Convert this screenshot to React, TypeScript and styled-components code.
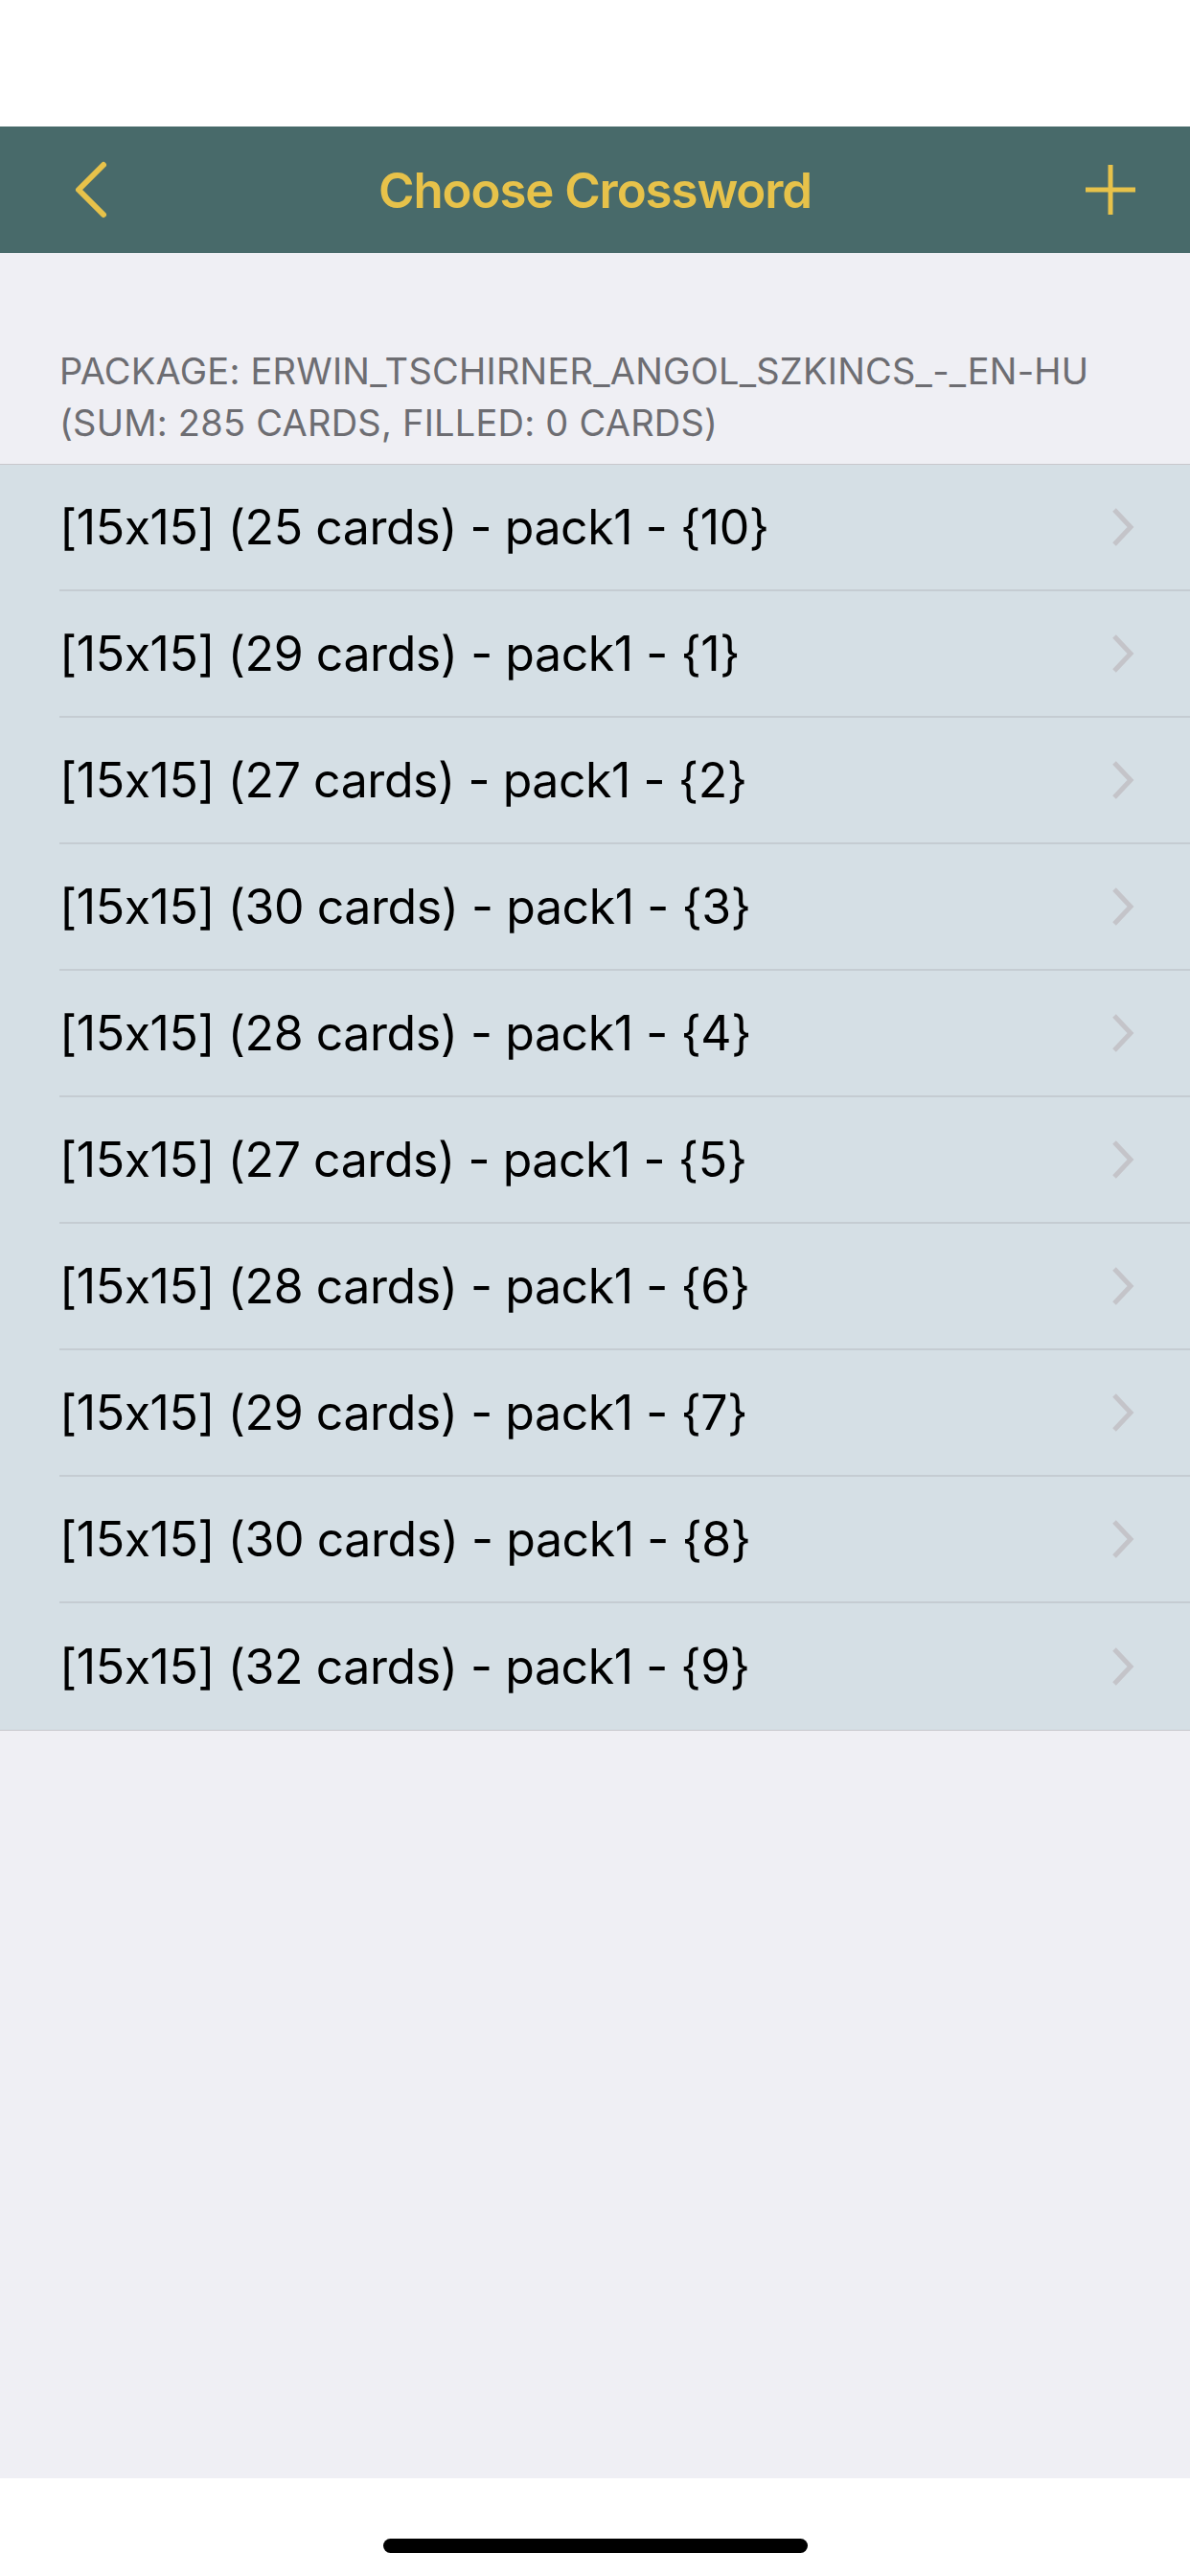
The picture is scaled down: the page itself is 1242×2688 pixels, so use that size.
import React from "react";
import styled, { createGlobalStyle } from "styled-components";

const GlobalStyle = createGlobalStyle`
  html, body { margin: 0; padding: 0; background: #ffffff; }
  body { font-family: Inter, "Noto Sans", "Liberation Sans", sans-serif; -webkit-font-smoothing: antialiased; }
`;

const Screen = styled.div`
  width: 1242px;
  height: 2688px;
  display: flex;
  flex-direction: column;
  background: #ffffff;
`;

const StatusBar = styled.div`
  height: 132px;
  flex: none;
  background: #ffffff;
`;

const NavBar = styled.header`
  height: 132px;
  flex: none;
  background: #486a6a;
  display: grid;
  grid-template-columns: 200px 1fr 200px;
  align-items: center;
`;

const NavButton = styled.button<{ $align: "start" | "end" }>`
  background: none;
  border: none;
  padding: 0;
  height: 100%;
  display: flex;
  align-items: center;
  justify-content: ${(p) => (p.$align === "start" ? "flex-start" : "flex-end")};
  padding-left: ${(p) => (p.$align === "start" ? "74px" : "0")};
  padding-right: ${(p) => (p.$align === "end" ? "57px" : "0")};
  cursor: pointer;
`;

const Title = styled.h1`
  margin: 0;
  text-align: center;
  color: #e7c24a;
  font-size: 51px;
  font-weight: 600;
  letter-spacing: -1.1px;
`;

const Content = styled.main`
  flex: 1;
  background: #efeff4;
  display: flex;
  flex-direction: column;
`;

const SectionHeader = styled.div`
  padding: 96px 40px 16px 62px;
  color: #6d6d72;
  font-size: 38px;
  line-height: 54px;
  text-transform: uppercase;
  letter-spacing: 0.23px;
`;

const List = styled.ul`
  list-style: none;
  margin: 0;
  padding: 0;
  background: #d5dfe5;
  border-top: 1px solid #c8c7cc;
  border-bottom: 1px solid #c8c7cc;
`;

const Row = styled.li`
  height: 132px;
  padding-left: 62px;
  display: flex;
  align-items: center;
  cursor: pointer;
`;

const RowInner = styled.div<{ $last: boolean }>`
  flex: 1;
  height: 100%;
  display: flex;
  align-items: center;
  justify-content: space-between;
  padding-right: 58px;
  box-sizing: border-box;
  border-bottom: ${(p) => (p.$last ? "none" : "2px solid #c5ccd2")};
`;

const RowLabel = styled.span`
  font-size: 50px;
  color: #000000;
  letter-spacing: -0.44px;
`;

const HomeArea = styled.div`
  height: 102px;
  flex: none;
  background: #ffffff;
  display: flex;
  justify-content: center;
  padding-top: 63px;
  box-sizing: border-box;
`;

const HomeIndicator = styled.div`
  width: 443px;
  height: 15px;
  border-radius: 8px;
  background: #000000;
`;

const BackIcon = () => (
  <svg width="40" height="62" viewBox="0 0 40 62" fill="none">
    <path d="M34 5 L8 31 L34 57" stroke="#e7c24a" strokeWidth="6" strokeLinecap="round" strokeLinejoin="round" />
  </svg>
);

const PlusIcon = () => (
  <svg width="52" height="52" viewBox="0 0 52 52" fill="none">
    <path d="M26 0 V52 M0 26 H52" stroke="#e7c24a" strokeWidth="5" />
  </svg>
);

const Chevron = () => (
  <svg width="24" height="42" viewBox="0 0 24 42" fill="none">
    <path d="M3 3 L20 21 L3 39" stroke="#c4c4c9" strokeWidth="5" strokeLinejoin="miter" />
  </svg>
);

const items = [
  { cards: 25, id: 10 },
  { cards: 29, id: 1 },
  { cards: 27, id: 2 },
  { cards: 30, id: 3 },
  { cards: 28, id: 4 },
  { cards: 27, id: 5 },
  { cards: 28, id: 6 },
  { cards: 29, id: 7 },
  { cards: 30, id: 8 },
  { cards: 32, id: 9 },
];

export default function App() {
  return (
    <>
      <GlobalStyle />
      <Screen>
        <StatusBar />
        <NavBar>
          <NavButton $align="start" aria-label="Back">
            <BackIcon />
          </NavButton>
          <Title>Choose Crossword</Title>
          <NavButton $align="end" aria-label="Add">
            <PlusIcon />
          </NavButton>
        </NavBar>
        <Content>
          <SectionHeader>
            Package: Erwin_Tschirner_Angol_szkincs_-_EN-HU
            <br />
            (Sum: 285 cards, filled: 0 cards)
          </SectionHeader>
          <List>
            {items.map((it, i) => (
              <Row key={it.id}>
                <RowInner $last={i === items.length - 1}>
                  <RowLabel>
                    [15x15] ({it.cards} cards) - pack1 - {"{"}
                    {it.id}
                    {"}"}
                  </RowLabel>
                  <Chevron />
                </RowInner>
              </Row>
            ))}
          </List>
        </Content>
        <HomeArea>
          <HomeIndicator />
        </HomeArea>
      </Screen>
    </>
  );
}
